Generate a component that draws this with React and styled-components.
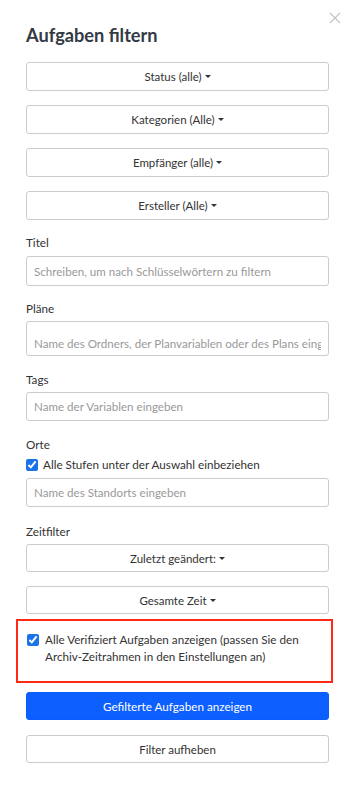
import React from "react";
import styled, { createGlobalStyle } from "styled-components";

const GlobalStyle = createGlobalStyle`
  html, body {
    margin: 0;
    padding: 0;
    background: #fff;
    font-family: Lato, "Open Sans", sans-serif;
    color: #333;
  }
  * { box-sizing: border-box; }
`;

export default function App() {
  return (
    <>
      <GlobalStyle />
      <Panel>
        <CloseButton aria-label="close">
          <svg width="12" height="12" viewBox="0 0 12 12">
            <path d="M1 1 L11 11 M11 1 L1 11" stroke="#c4c4c4" strokeWidth="1.2" fill="none" />
          </svg>
        </CloseButton>
        <Title>Aufgaben filtern</Title>

        <DropButton $mt="15px">Status (alle)<Caret /></DropButton>
        <DropButton $mt="14px">Kategorien (Alle)<Caret /></DropButton>
        <DropButton $mt="14px">Empfänger (alle)<Caret /></DropButton>
        <DropButton $mt="14px">Ersteller (Alle)<Caret /></DropButton>

        <Label $mt="13px">Titel</Label>
        <TextInput $mt="5px" placeholder="Schreiben, um nach Schlüsselwörtern zu filtern" />

        <Label $mt="13px">Pläne</Label>
        <TextInput $mt="4px" $h="35px" $pt="9px" placeholder="Name des Ordners, der Planvariablen oder des Plans eingeben" />

        <Label $mt="14px">Tags</Label>
        <TextInput $mt="4px" $h="29px" placeholder="Name der Variablen eingeben" />

        <Label $mt="14px">Orte</Label>
        <CheckRow $mt="3px">
          <Check type="checkbox" defaultChecked />
          <span>Alle Stufen unter der Auswahl einbeziehen</span>
        </CheckRow>
        <TextInput $mt="5px" $h="29px" placeholder="Name des Standorts eingeben" />

        <Label $mt="15px">Zeitfilter</Label>
        <DropButton $mt="4px" $h="28px">Zuletzt geändert:<Caret /></DropButton>
        <DropButton $mt="14px" $h="28px">Gesamte Zeit<Caret /></DropButton>

        <Highlight>
          <CheckRow $align="flex-start" $gap="6px">
            <Check type="checkbox" defaultChecked $top="3px" />
            <span>Alle Verifiziert Aufgaben anzeigen (passen Sie den Archiv-Zeitrahmen in den Einstellungen an)</span>
          </CheckRow>
        </Highlight>

        <PrimaryButton>Gefilterte Aufgaben anzeigen</PrimaryButton>
        <DropButton $mt="15px" $h="28px">Filter aufheben</DropButton>
      </Panel>
    </>
  );
}

const Panel = styled.div`
  position: relative;
  width: 354px;
  min-height: 786px;
  padding: 23px 25px 0 26px;
  display: flex;
  flex-direction: column;
`;

const CloseButton = styled.button`
  position: absolute;
  top: 12px;
  right: 13px;
  border: none;
  background: none;
  padding: 0;
  width: 12px;
  height: 12px;
  display: flex;
`;

const Title = styled.h1`
  margin: 0;
  font-size: 18.2px;
  line-height: 24px;
  font-weight: 700;
  color: #333a44;
`;

const DropButton = styled.button`
  margin-top: ${p => p.$mt || "0"};
  height: ${p => p.$h || "29px"};
  width: 100%;
  border: 1px solid #ccc;
  border-radius: 3px;
  background: #fff;
  color: #333;
  font-family: Lato, sans-serif;
  font-size: 11.5px;
  display: flex;
  align-items: center;
  justify-content: center;
  padding: 0;
`;

const Caret = styled.span`
  display: inline-block;
  margin-left: 3px;
  width: 0;
  height: 0;
  border-left: 3px solid transparent;
  border-right: 3px solid transparent;
  border-top: 3px solid #333;
`;

const Label = styled.div`
  margin-top: ${p => p.$mt || "0"};
  font-size: 11.7px;
  line-height: 18px;
  color: #333;
`;

const TextInput = styled.input`
  margin-top: ${p => p.$mt || "0"};
  height: ${p => p.$h || "30px"};
  width: 100%;
  border: 1px solid #ccc;
  border-radius: 3px;
  padding: ${p => p.$pt || "0"} 7px 0 7px;
  font-family: Lato, sans-serif;
  font-size: 11.6px;
  color: #333;
  outline: none;
  &::placeholder {
    color: #999;
  }
`;

const CheckRow = styled.label`
  margin-top: ${p => p.$mt || "0"};
  display: flex;
  align-items: ${p => p.$align || "center"};
  gap: ${p => p.$gap || "5px"};
  font-size: 11.7px;
  line-height: 17px;
  color: #333;
`;

const Check = styled.input`
  margin: 0;
  margin-top: ${p => p.$top || "0"};
  width: 12px;
  height: 12px;
  flex-shrink: 0;
  accent-color: #1a73e8;
`;

const Highlight = styled.div`
  margin: 5px -4px 0 -10px;
  border: 2px solid #ff2a16;
  padding: 10px 10px 16px 9px;
`;

const PrimaryButton = styled.button`
  margin-top: 9px;
  height: 28px;
  width: 100%;
  border: 1px solid #0a5cff;
  border-radius: 3px;
  background: #0d60ff;
  color: #fff;
  font-family: Lato, sans-serif;
  font-size: 11.7px;
  padding: 0;
`;
